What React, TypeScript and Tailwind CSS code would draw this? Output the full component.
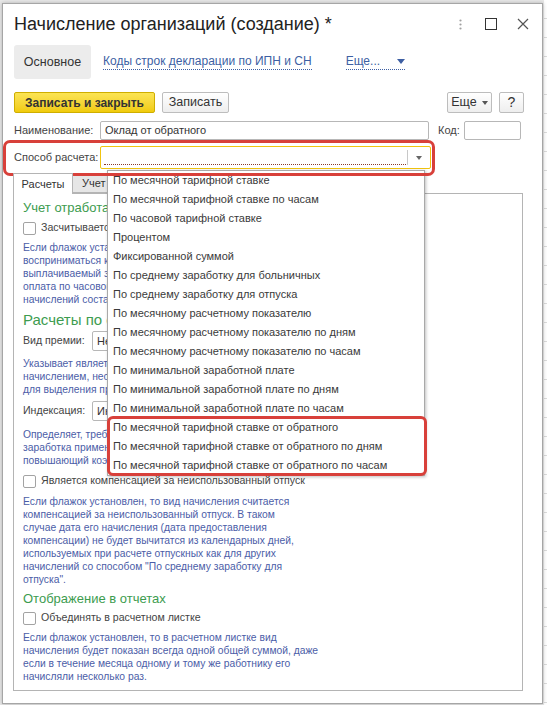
const methods = [
  'По месячной тарифной ставке',
  'По месячной тарифной ставке по часам',
  'По часовой тарифной ставке',
  'Процентом',
  'Фиксированной суммой',
  'По среднему заработку для больничных',
  'По среднему заработку для отпуска',
  'По месячному расчетному показателю',
  'По месячному расчетному показателю по дням',
  'По месячному расчетному показателю по часам',
  'По минимальной заработной плате',
  'По минимальной заработной плате по дням',
  'По минимальной заработной плате по часам',
  'По месячной тарифной ставке от обратного',
  'По месячной тарифной ставке от обратного по дням',
  'По месячной тарифной ставке от обратного по часам',
];

function Checkbox() {
  return <span className="inline-block h-[13px] w-[13px] shrink-0 rounded-[2px] border border-[#a3a3a3] bg-white" />;
}

function Note({ lines, className = '' }: { lines: string[]; className?: string }) {
  return (
    <div className={`text-[10.3px] leading-[13px] text-[#4b5da7] ${className}`}>
      {lines.map((l) => (
        <div key={l} className="whitespace-nowrap">
          {l}
        </div>
      ))}
    </div>
  );
}

function CheckRow({ label, className = '' }: { label: string; className?: string }) {
  return (
    <div className={`flex h-[18px] items-center gap-[5px] text-[10.6px] text-[#444] ${className}`}>
      <Checkbox />
      <span className="whitespace-nowrap">{label}</span>
    </div>
  );
}

function Btn({ children, className = '' }: { children: React.ReactNode; className?: string }) {
  return (
    <div
      className={`flex h-[21px] items-center justify-center rounded-[2px] border border-[#bdbdbd] bg-gradient-to-b from-white to-[#eeeeee] text-[12.5px] text-[#333] ${className}`}
    >
      {children}
    </div>
  );
}

export default function App() {
  return (
    <div className="flex h-[705px] w-[547px] overflow-hidden bg-[#e9e9e9] font-['Liberation_Sans',Arial,sans-serif]">
      <div className="w-[2px] shrink-0" />

      {/* dialog */}
      <div className="relative mt-[3px] h-[701px] w-[541px] shrink-0 border border-[#a6a6a6] bg-white shadow-[0_0_4px_rgba(0,0,0,0.25)]">
        {/* title */}
        <div className="flex h-[40px] items-center pl-[11px] pr-[13px]">
          <span className="text-[18px] text-[#222]">Начисление организаций (создание) *</span>
          <div className="ml-auto flex items-center">
            <svg width="3" height="11" viewBox="0 0 3 11">
              <circle cx="1.5" cy="1.5" r="1.1" fill="#a0a0a0" />
              <circle cx="1.5" cy="5.5" r="1.1" fill="#a0a0a0" />
              <circle cx="1.5" cy="9.5" r="1.1" fill="#a0a0a0" />
            </svg>
            <svg className="ml-[23px]" width="12" height="12" viewBox="0 0 12 12">
              <rect x="0.5" y="0.5" width="11" height="11" fill="none" stroke="#333" strokeWidth="1" />
            </svg>
            <svg className="ml-[20px]" width="12" height="12" viewBox="0 0 12 12">
              <path d="M1 1 L11 11 M11 1 L1 11" stroke="#555" strokeWidth="1.2" fill="none" />
            </svg>
          </div>
        </div>

        {/* form tabs */}
        <div className="mt-[1px] flex items-center pl-[11px]">
          <div className="flex h-[34px] w-[77px] items-center justify-center rounded-[3px] bg-[#ececec] text-[12.5px] text-[#333]">
            Основное
          </div>
          <span className="ml-[12px] border-b border-dotted border-[#3d5fa3] text-[12px] leading-[15px] text-[#3d5fa3]">
            Коды строк декларации по ИПН и СН
          </span>
          <span className="ml-[34px] flex items-center border-b border-dotted border-[#3d5fa3] text-[12px] leading-[15px] text-[#3d5fa3]">
            Еще...
            <svg className="ml-[17px]" width="8" height="5" viewBox="0 0 8 5">
              <path d="M0 0 H8 L4 5 Z" fill="#3d5fa3" />
            </svg>
          </span>
        </div>

        {/* command bar */}
        <div className="mt-[13px] flex items-center pl-[11px] pr-[18px]">
          <div className="flex h-[21px] w-[141px] items-center justify-center rounded-[2px] border border-[#cfae00] bg-gradient-to-b from-[#fbe452] to-[#f1cb07] text-[12px] font-bold text-[#333]">
            Записать и закрыть
          </div>
          <Btn className="ml-[7px] w-[67px]">Записать</Btn>
          <Btn className="ml-auto w-[45px] gap-[5px]">
            Еще
            <svg width="6" height="4" viewBox="0 0 6 4">
              <path d="M0 0 H6 L3 4 Z" fill="#555" />
            </svg>
          </Btn>
          <Btn className="ml-[7px] w-[25px] text-[14px]">?</Btn>
        </div>

        {/* name row */}
        <div className="mt-[8px] flex items-center pl-[11px]">
          <span className="w-[86px] whitespace-nowrap text-[11px] text-[#444]">Наименование:</span>
          <div className="flex h-[19px] w-[329px] items-center rounded-[2px] border border-[#b7b7b7] pl-[4px] text-[11px] text-[#333]">
            Оклад от обратного
          </div>
          <span className="ml-[9px] w-[26px] text-[11px] text-[#444]">Код:</span>
          <div className="h-[19px] w-[57px] rounded-[2px] border border-[#b7b7b7]" />
        </div>

        {/* method row */}
        <div className="mt-[6px] flex items-center pl-[11px]">
          <span className="w-[86px] whitespace-nowrap text-[11px] text-[#444]">Способ расчета:</span>
          <div className="flex h-[23px] w-[331px] items-stretch rounded-[2px] border border-[#f1c40f] pl-[3px]">
            <div className="mb-[3px] flex-1 border-b border-dotted border-[#8a3b2a]" />
            <div className="my-[3px] ml-[1px] w-px bg-[#c8c8c8]" />
            <div className="flex w-[22px] items-center justify-center">
              <svg width="6" height="4" viewBox="0 0 6 4">
                <path d="M0 0 H6 L3 4 Z" fill="#666" />
              </svg>
            </div>
          </div>
        </div>

        {/* tabs */}
        <div className="mt-[4px] flex pl-[10px]">
          <div className="relative z-10 -mb-px flex h-[21px] w-[60px] items-center justify-center border border-b-0 border-[#b4b4b4] bg-white text-[11px] text-[#333]">
            Расчеты
          </div>
          <div className="flex h-[20px] w-[110px] items-center border border-l-0 border-[#b4b4b4] bg-[#e6e6e6] pl-[9px] text-[11px] text-[#333]">
            Учет времени
          </div>
        </div>

        {/* tab panel */}
        <div className="ml-[10px] h-[498px] w-[510px] border border-[#b4b4b4] px-[9px]">
          <div className="mt-[5px] text-[13px] leading-[18px] text-[#3d9c4f]">Учет отработанного времени</div>
          <CheckRow className="mt-[2px]" label="Засчитывается в норму времени" />
          <Note
            className="mt-[4px]"
            lines={[
              'Если флажок установлен, то начисление будет',
              'восприниматься как оплата времени,',
              'выплачиваемый за отработанное время.',
              'оплата по часовой ставке будет',
              'начислений составом оплаты.',
            ]}
          />
          <div className="mt-[4px] text-[15px] leading-[20px] text-[#3d9c4f]">Расчеты по среднему заработку</div>
          <div className="mt-[1px] flex h-[20px] items-center text-[10.6px] text-[#444]">
            <span className="w-[69px]">Вид премии:</span>
            <div className="flex h-[20px] w-[200px] items-center rounded-[2px] border border-[#b7b7b7] pl-[4px] text-[11px] text-[#333]">
              Не премия
            </div>
          </div>
          <Note
            className="mt-[6px]"
            lines={['Указывает является ли начисление', 'начислением, необходимо', 'для выделения премий.']}
          />
          <div className="mt-[5px] flex h-[20px] items-center text-[10.6px] text-[#444]">
            <span className="w-[69px]">Индексация:</span>
            <div className="flex h-[20px] w-[200px] items-center rounded-[2px] border border-[#b7b7b7] pl-[4px] text-[11px] text-[#333]">
              Индексируется
            </div>
          </div>
          <Note
            className="mt-[7px]"
            lines={['Определяет, требуется ли при расчете', 'заработка применять', 'повышающий коэффициент.']}
          />
          <CheckRow className="mt-[5px]" label="Является компенсацией за неиспользованный отпуск" />
          <Note
            className="mt-[5px]"
            lines={[
              'Если флажок установлен, то вид начисления считается',
              'компенсацией за неиспользованный отпуск. В таком',
              'случае дата его начисления (дата предоставления',
              'компенсации) не будет вычитатся из календарных дней,',
              'используемых при расчете отпускных как для других',
              'начислений со способом "По среднему заработку для',
              'отпуска".',
            ]}
          />
          <div className="mt-[4px] text-[13px] leading-[18px] text-[#3d9c4f]">Отображение в отчетах</div>
          <CheckRow className="mt-[1px]" label="Объединять в расчетном листке" />
          <Note
            className="mt-[4px]"
            lines={[
              'Если флажок установлен, то в расчетном листке вид',
              'начисления будет показан всегда одной общей суммой, даже',
              'если в течение месяца одному и тому же работнику его',
              'начисляли несколько раз.',
            ]}
          />
        </div>

        {/* dropdown list */}
        <div className="absolute left-[104px] top-[166px] w-[318px] border border-[#a9a9a9] bg-white shadow-[1px_1px_3px_rgba(0,0,0,0.25)]">
          {methods.map((m) => (
            <div key={m} className="flex h-[19px] items-center whitespace-nowrap pl-[5px] text-[11px] text-[#3a3a3a]">
              {m}
            </div>
          ))}
        </div>

        {/* highlights */}
        <div className="absolute left-0 top-[136px] h-[36px] w-[432px] rounded-[7px] border-[3px] border-[#d8403a]" />
        <div className="absolute left-[104px] top-[412px] h-[60px] w-[320px] rounded-[6px] border-[3px] border-[#d8403a]" />
      </div>

      {/* window behind */}
      <div className="ml-[1px] flex-1 overflow-hidden bg-white">
        {Array.from({ length: 37 }).map((_, i) => (
          <div key={i} className="h-[19px] border-b border-[#dcdcdc]" />
        ))}
      </div>
    </div>
  );
}
